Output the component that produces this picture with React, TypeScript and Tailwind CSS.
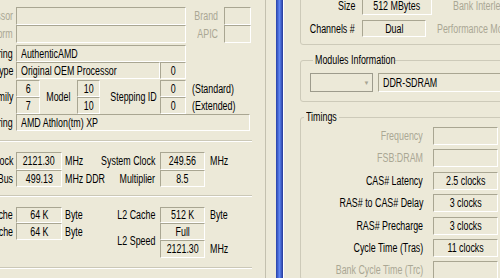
import type { ReactNode } from "react";

type Side = "l" | "r" | "c";

// the original UI font is a narrow Tahoma, so text is squeezed horizontally
function T({ children, o = "l" }: { children?: ReactNode; o?: Side }) {
  const origin = o === "r" ? "origin-right" : o === "c" ? "origin-center" : "origin-left";
  return <span className={`inline-block shrink-0 scale-x-[0.74] ${origin}`}>{children}</span>;
}

const field =
  "flex h-full items-center border border-t-[#a9a692] border-l-[#a9a692] border-b-white border-r-white";

function Box({ w, children, left }: { w: string; children?: ReactNode; left?: boolean }) {
  return (
    <div className={`${field} ${w} ${left ? "justify-start pl-[4px]" : "justify-center"}`}>
      {children != null && <T o={left ? "l" : "c"}>{children}</T>}
    </div>
  );
}

function Label({ w, h, children, dim, pr = "pr-[3px]" }: { w: string; h: string; children: ReactNode; dim?: boolean; pr?: string }) {
  return (
    <div className={`flex items-center justify-end ${w} ${h} ${pr} ${dim ? "text-[#aaa794]" : ""}`}>
      <T o="r">{children}</T>
    </div>
  );
}

function Unit({ h, children, pl = "pl-[3px]" }: { h: string; children?: ReactNode; pl?: string }) {
  return (
    <div className={`flex items-center ${h} ${pl}`}>
      <T>{children}</T>
    </div>
  );
}

function Rule() {
  return <div className="h-[2px] w-[312px] border-t border-b border-t-[#cbc8b7] border-b-white" />;
}

const timings: [string, string, boolean][] = [
  ["Frequency", "", true],
  ["FSB:DRAM", "", true],
  ["CAS# Latency", "2.5 clocks", false],
  ["RAS# to CAS# Delay", "3 clocks", false],
  ["RAS# Precharge", "3 clocks", false],
  ["Cycle Time (Tras)", "11 clocks", false],
  ["Bank Cycle Time (Trc)", "", true],
];

export default function App() {
  return (
    <div className="flex h-[278px] w-[500px] overflow-hidden whitespace-nowrap bg-[#ECE9D8] font-['Liberation_Sans',Arial,sans-serif] text-[12px] leading-none text-black">
      {/* CPU window */}
      <div className="w-[266px] shrink-0 overflow-hidden border-r border-[#c3c0af]">
        <div className="ml-[-60px] w-[326px] pt-[7px]">
          <div className="flex h-[18px] items-center">
            <Label w="w-[76px]" h="h-full" dim>Processor</Label>
            <Box w="w-[170px]" />
            <Label w="w-[38px]" h="h-full" pr="pr-[6px]" dim>Brand</Label>
            <Box w="w-[27px]" />
          </div>
          <div className="flex h-[18px] items-center">
            <Label w="w-[76px]" h="h-full" dim>Platform</Label>
            <Box w="w-[170px]" />
            <Label w="w-[38px]" h="h-full" pr="pr-[6px]" dim>APIC</Label>
            <Box w="w-[27px]" />
          </div>
          <div className="mt-[2px] flex h-[17px] items-center">
            <Label w="w-[76px]" h="h-full">Vendor String</Label>
            <Box w="w-[170px]" left>AuthenticAMD</Box>
          </div>
          <div className="flex h-[17px] items-center">
            <Label w="w-[76px]" h="h-full">CPU Type</Label>
            <Box w="w-[144px]" left>Original OEM Processor</Box>
            <Box w="w-[26px]">0</Box>
          </div>
          <div className="mt-[1px] flex h-[34px]">
            <Label w="w-[76px]" h="h-full">Family</Label>
            <div className="flex w-[24px] flex-col">
              <div className="h-[17px]"><Box w="w-full">6</Box></div>
              <div className="h-[17px]"><Box w="w-full">7</Box></div>
            </div>
            <div className="flex w-[37px] items-center justify-center">
              <T o="c">Model</T>
            </div>
            <div className="flex w-[23px] flex-col">
              <div className="h-[17px]"><Box w="w-full">10</Box></div>
              <div className="h-[17px]"><Box w="w-full">10</Box></div>
            </div>
            <Label w="w-[60px]" h="h-full">Stepping ID</Label>
            <div className="flex w-[26px] flex-col">
              <div className="h-[17px]"><Box w="w-full">0</Box></div>
              <div className="h-[17px]"><Box w="w-full">0</Box></div>
            </div>
            <div className="flex flex-col">
              <Unit h="h-[17px]" pl="pl-[6px]">(Standard)</Unit>
              <Unit h="h-[17px]" pl="pl-[6px]">(Extended)</Unit>
            </div>
          </div>
          <div className="flex h-[17px] items-center">
            <Label w="w-[76px]" h="h-full">Brand String</Label>
            <Box w="w-[234px]" left>AMD Athlon(tm) XP</Box>
          </div>

          <div className="mt-[9px]"><Rule /></div>

          <div className="mt-[10px] flex">
            <div className="flex flex-col">
              <Label w="w-[76px]" h="h-[18px]">Internal Clock</Label>
              <Label w="w-[76px]" h="h-[17px]">System Bus</Label>
            </div>
            <div className="flex w-[46px] flex-col">
              <div className="h-[18px]"><Box w="w-full">2121.30</Box></div>
              <div className="h-[17px]"><Box w="w-full">499.13</Box></div>
            </div>
            <div className="flex w-[40px] flex-col">
              <Unit h="h-[18px]">MHz</Unit>
              <Unit h="h-[17px]">MHz DDR</Unit>
            </div>
            <div className="flex flex-col">
              <Label w="w-[58px]" h="h-[18px]" pr="pr-[5px]">System Clock</Label>
              <Label w="w-[58px]" h="h-[17px]" pr="pr-[5px]">Multiplier</Label>
            </div>
            <div className="flex w-[45px] flex-col">
              <div className="h-[18px]"><Box w="w-full">249.56</Box></div>
              <div className="h-[17px]"><Box w="w-full">8.5</Box></div>
            </div>
            <Unit h="h-[18px]" pl="pl-[5px]">MHz</Unit>
          </div>

          <div className="mt-[8px]"><Rule /></div>

          <div className="mt-[10px] flex">
            <div className="flex flex-col">
              <Label w="w-[76px]" h="h-[16px]">L1 I-Cache</Label>
              <Label w="w-[76px]" h="h-[17px]">L1 D-Cache</Label>
            </div>
            <div className="flex w-[46px] flex-col">
              <div className="h-[16px]"><Box w="w-full">64 K</Box></div>
              <div className="h-[17px]"><Box w="w-full">64 K</Box></div>
            </div>
            <div className="flex w-[40px] flex-col">
              <Unit h="h-[16px]">Byte</Unit>
              <Unit h="h-[17px]">Byte</Unit>
            </div>
            <div className="flex flex-col">
              <Label w="w-[58px]" h="h-[16px]" pr="pr-[5px]">L2 Cache</Label>
              <Label w="w-[58px]" h="h-[35px]" pr="pr-[5px]">L2 Speed</Label>
            </div>
            <div className="flex w-[45px] flex-col">
              <div className="h-[16px]"><Box w="w-full">512 K</Box></div>
              <div className="h-[17px]"><Box w="w-full">Full</Box></div>
              <div className="h-[18px]"><Box w="w-full">2121.30</Box></div>
            </div>
            <div className="flex flex-col">
              <Unit h="h-[16px]" pl="pl-[5px]">Byte</Unit>
              <div className="h-[17px]" />
              <Unit h="h-[18px]" pl="pl-[5px]">MHz</Unit>
            </div>
          </div>

          <div className="mt-[9px]"><Rule /></div>
        </div>
      </div>

      <div className="w-[10px] shrink-0" />
      <div className="w-[7px] shrink-0 bg-gradient-to-r from-[#2840a8] via-[#5f85f2] to-[#25399a]" />

      {/* Memory window */}
      <div className="min-w-0 flex-1 overflow-hidden border-l border-white pl-[16px]">
        <div className="mt-[-12px] h-[57px] w-[240px] rounded-[3px] border border-[#cdcab9] pt-[8px]">
          <div className="flex h-[18px] items-center">
            <Label w="w-[61px]" h="h-full" pr="pr-[7px]">Size</Label>
            <Box w="w-[70px]">512 MBytes</Box>
            <div className="pl-[21px] text-[#aaa794]"><T>Bank Interleave</T></div>
          </div>
          <div className="mt-[5px] flex h-[17px] items-center">
            <Label w="w-[61px]" h="h-full" pr="pr-[7px]">Channels #</Label>
            <Box w="w-[70px]">Dual</Box>
            <div className="pl-[11px] text-[#aaa794]"><T>Performance Mode</T></div>
          </div>
        </div>

        <fieldset className="mt-[9px] w-[240px] rounded-[3px] border border-[#cdcab9] pb-[9px] pl-[9px]">
          <legend className="ml-[3px] w-[82px] px-[2px] leading-[12px]">
            <T>Modules Information</T>
          </legend>
          <div className="mt-[7px] flex h-[19px] items-stretch">
            <div className="flex w-[63px] justify-end border border-[#9d9b8c]">
              <div className="flex w-[11px] items-center justify-center text-[6px] text-[#a7a493]">▼</div>
            </div>
            <div className="ml-[5px] flex-1">
              <Box w="w-full" left>DDR-SDRAM</Box>
            </div>
          </div>
        </fieldset>

        <fieldset className="mt-[9px] w-[240px] rounded-[3px] border border-[#cdcab9]">
          <legend className="ml-[3px] w-[35px] px-[2px] leading-[12px]">
            <T>Timings</T>
          </legend>
          <div className="mt-[4px] flex flex-col gap-[4.4px]">
            {timings.map(([label, value, off]) => (
              <div key={label} className="flex h-[18px] items-center">
                <Label w="w-[132px]" h="h-full" pr="pr-[10px]" dim={off}>{label}</Label>
                <Box w="w-[65px]">{value || null}</Box>
              </div>
            ))}
          </div>
        </fieldset>
      </div>
    </div>
  );
}
